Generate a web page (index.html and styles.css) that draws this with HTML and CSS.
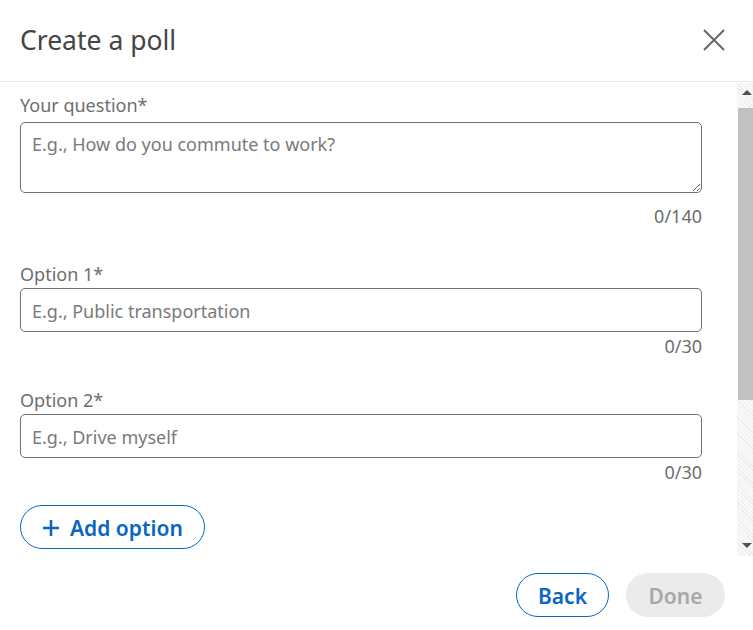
FILE: index.html
```html
<!DOCTYPE html>
<html lang="en">
<head>
<meta charset="utf-8">
<title>Create a poll</title>
<link rel="stylesheet" href="styles.css">
</head>
<body>
<div class="modal">
  <header class="modal-header">
    <h2 class="modal-title">Create a poll</h2>
    <button class="close-btn" aria-label="Dismiss">
      <svg viewBox="0 0 22 22" width="22" height="22"><path d="M1 1 L21 21 M21 1 L1 21" stroke="#666" stroke-width="2" fill="none"/></svg>
    </button>
  </header>
  <div class="modal-body">
    <div class="body-content">
      <div class="field field-question">
        <label class="field-label">Your question*</label>
        <textarea class="field-textarea" placeholder="E.g., How do you commute to work?"></textarea>
        <div class="field-counter counter-question">0/140</div>
      </div>
      <div class="field">
        <label class="field-label">Option 1*</label>
        <input class="field-input" type="text" placeholder="E.g., Public transportation">
        <div class="field-counter">0/30</div>
      </div>
      <div class="field">
        <label class="field-label">Option 2*</label>
        <input class="field-input" type="text" placeholder="E.g., Drive myself">
        <div class="field-counter">0/30</div>
      </div>
      <button class="add-btn"><svg class="plus" viewBox="0 0 18 18" width="18" height="18"><path d="M9 1 V17 M1 9 H17" stroke="#0a66c2" stroke-width="2.6" fill="none"/></svg><span>Add option</span></button>
    </div>
    <div class="scrollbar">
      <div class="sb-btn sb-up"><span class="tri-up"></span></div>
      <div class="sb-track sb-track-top"></div>
      <div class="sb-thumb"></div>
      <div class="sb-track sb-track-rest"></div>
      <div class="sb-btn sb-down"><span class="tri-down"></span></div>
    </div>
  </div>
  <footer class="modal-footer">
    <button class="btn btn-secondary">Back</button>
    <button class="btn btn-disabled" disabled>Done</button>
  </footer>
</div>
</body>
</html>
```
FILE: styles.css
```css
* { box-sizing: border-box; }
html, body {
  margin: 0;
  padding: 0;
  background: #fff;
}
body {
  font-family: "Noto Sans", "Open Sans", sans-serif;
  color: #666;
  width: 753px;
  height: 630px;
  overflow: hidden;
}
.modal {
  display: flex;
  flex-direction: column;
  width: 753px;
  height: 630px;
}
.modal-header {
  height: 82px;
  flex: none;
  display: flex;
  align-items: center;
  justify-content: space-between;
  padding: 0 28px 1px 20px;
  border-bottom: 1px solid #e8e8e8;
}
.modal-title {
  margin: 0;
  font-weight: 400;
  font-size: 26.5px;
  color: #454545;
  letter-spacing: 0;
}
.close-btn {
  border: 0;
  background: none;
  padding: 0;
  width: 22px;
  height: 22px;
  display: flex;
}
.modal-body {
  height: 474px;
  flex: none;
  display: flex;
  overflow: hidden;
}
.body-content {
  flex: 1;
  padding: 11px 35px 0 20px;
  overflow: hidden;
}
.field {
  display: flex;
  flex-direction: column;
  margin-top: 30px;
}
.field-question { margin-top: 0; }
.field-label {
  font-size: 18px;
  line-height: 24px;
  color: #6e6e6e;
  margin-bottom: 2px;
}
.field-question .field-label { margin-bottom: 5px; }
.field-textarea {
  width: 100%;
  height: 71px;
  border: 1px solid #707070;
  border-radius: 5px;
  padding: 9px 11px 6px;
  font-family: inherit;
  font-size: 18px;
  line-height: 24px;
  resize: vertical;
  color: #333;
}
.field-input {
  width: 100%;
  height: 44px;
  border: 1px solid #707070;
  border-radius: 5px;
  padding: 1px 11px 0;
  font-family: inherit;
  font-size: 18px;
  color: #333;
}
.field-textarea::placeholder,
.field-input::placeholder { color: #7a7a7a; opacity: 1; }
.field-counter {
  text-align: right;
  font-size: 18px;
  line-height: 24px;
  color: #6e6e6e;
  margin-top: 2px;
}
.counter-question { margin-top: 11px; margin-bottom: 4px; }
.add-btn {
  margin-top: 21px;
  height: 44px;
  width: 185px;
  border: 1px solid #0a66c2;
  border-radius: 22px;
  background: #fff;
  color: #0a66c2;
  font-family: inherit;
  font-size: 21px;
  font-weight: 600;
  display: flex;
  align-items: center;
  justify-content: flex-start;
  gap: 10px;
  padding: 1px 0 0 21px;
}
.plus { flex: none; margin-top: 1px; }
.scrollbar {
  width: 16px;
  flex: none;
  display: flex;
  flex-direction: column;
  padding-top: 1px;
}
.sb-btn {
  height: 18px;
  flex: none;
  display: flex;
  align-items: center;
  justify-content: center;
  padding-left: 3px;
  background: repeating-linear-gradient(45deg, #ededed 0 1px, #f9f9f9 1px 3px);
}
.tri-up {
  width: 0; height: 0;
  border-left: 5px solid transparent;
  border-right: 5px solid transparent;
  border-bottom: 5px solid #505050;
}
.tri-down {
  width: 0; height: 0;
  border-left: 5px solid transparent;
  border-right: 5px solid transparent;
  border-top: 5px solid #505050;
}
.sb-track {
  background: repeating-linear-gradient(45deg, #ededed 0 1px, #f9f9f9 1px 3px);
}
.sb-track-top { height: 7px; flex: none; }
.sb-thumb {
  height: 292px;
  flex: none;
  margin-left: 1px;
  background: #c1c1c1;
}
.sb-track-rest { flex: 1; }
.sb-down { height: 20px; padding-bottom: 2px; }
.modal-footer {
  flex: 1;
  display: flex;
  justify-content: flex-end;
  align-items: flex-start;
  gap: 17px;
  padding: 17px 28px 0 0;
}
.btn {
  height: 44px;
  border-radius: 22px;
  font-family: inherit;
  font-size: 21px;
  font-weight: 600;
  padding: 1px 0 0;
}
.btn-secondary {
  width: 93px;
  background: #fff;
  border: 1px solid #0a66c2;
  color: #0a66c2;
}
.btn-disabled {
  width: 99px;
  background: #ebebeb;
  border: 0;
  color: #a8a8a8;
}
```
